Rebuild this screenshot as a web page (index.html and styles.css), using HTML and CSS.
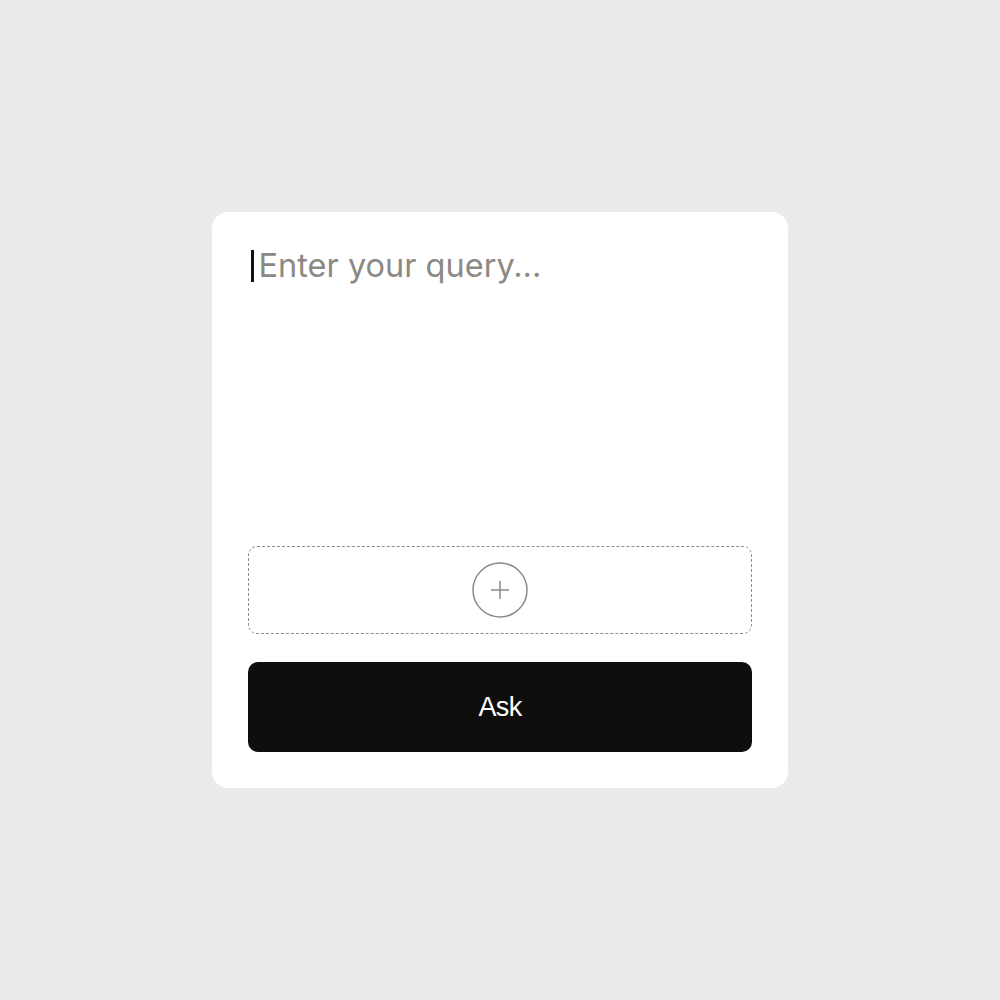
FILE: index.html
```html
<!DOCTYPE html>
<html>
<head>
<meta charset="utf-8">
<link rel="stylesheet" href="styles.css">
</head>
<body>
<div class="card">
  <div class="query">
    <span class="caret"></span><span class="placeholder">Enter your query...</span>
  </div>
  <div class="drop">
    <svg class="plus" width="56" height="56" viewBox="0 0 56 56">
      <circle cx="28" cy="28" r="27" fill="none" stroke="#8f8b87" stroke-width="1.5"/>
      <path d="M28 19V37M19 28H37" stroke="#8f8b87" stroke-width="1.5" fill="none"/>
    </svg>
  </div>
  <button class="ask">Ask</button>
</div>
</body>
</html>
```
FILE: styles.css
```css
html, body {
  margin: 0;
  padding: 0;
}
body {
  background: #eaeaea;
  width: 1000px;
  height: 1000px;
  display: flex;
  align-items: center;
  justify-content: center;
  font-family: Inter, "Liberation Sans", sans-serif;
}
.card {
  width: 576px;
  height: 576px;
  box-sizing: border-box;
  background: #ffffff;
  border-radius: 16px;
  padding: 36px;
  display: flex;
  flex-direction: column;
}
.query {
  height: 298px;
  display: flex;
  align-items: flex-start;
}
.caret {
  width: 2.5px;
  height: 32px;
  background: #111;
  margin-top: 2px;
  margin-left: 3px;
  margin-right: 5px;
}
.placeholder {
  font-size: 32.5px;
  line-height: 35px;
  color: #8c8984;
  letter-spacing: 0;
}
.drop {
  height: 88px;
  box-sizing: border-box;
  border: 1.5px dashed #8f8c89;
  border-radius: 9px;
  display: flex;
  align-items: center;
  justify-content: center;
}
.ask {
  margin-top: 28px;
  height: 90px;
  border: none;
  border-radius: 10px;
  background: #0f0e0c;
  color: #ffffff;
  font-family: "Liberation Sans", Arial, sans-serif;
  font-size: 27px;
  letter-spacing: -0.6px;
  padding: 0;
}
```
